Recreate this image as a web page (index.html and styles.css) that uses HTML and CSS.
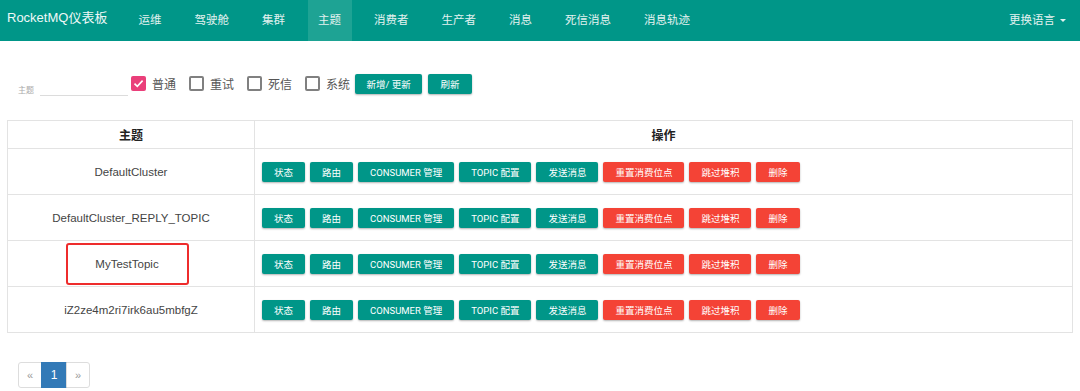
FILE: index.html
```html
<!DOCTYPE html>
<html lang="zh">
<head>
<meta charset="utf-8">
<title>RocketMQ仪表板</title>
<link rel="stylesheet" href="styles.css">
</head>
<body>
<nav class="navbar">
  <div class="brand">RocketMQ仪表板</div>
  <ul class="nav">
    <li>运维</li>
    <li>驾驶舱</li>
    <li>集群</li>
    <li class="active">主题</li>
    <li>消费者</li>
    <li>生产者</li>
    <li>消息</li>
    <li>死信消息</li>
    <li>消息轨迹</li>
  </ul>
  <div class="lang">更换语言 <span class="caret"></span></div>
</nav>

<main class="content">
  <div class="filter">
    <div class="field">
      <label class="field-label">主题</label>
      <input class="field-input" type="text">
    </div>
    <div class="checks">
      <span class="cb checked"><svg viewBox="0 0 15 15" width="15" height="15"><path d="M3.5 7.6 L6.3 10.3 L11.6 4.6" fill="none" stroke="#fff" stroke-width="1.6"/></svg></span>
      <span class="cb-label">普通</span>
      <span class="cb"></span>
      <span class="cb-label">重试</span>
      <span class="cb"></span>
      <span class="cb-label">死信</span>
      <span class="cb"></span>
      <span class="cb-label last">系统</span>
      <button class="btn teal wide">新增/ 更新</button>
      <button class="btn teal refresh">刷新</button>
    </div>
  </div>

  <table class="grid">
    <thead>
      <tr><th class="col-name">主题</th><th>操作</th></tr>
    </thead>
    <tbody>
      <tr>
        <td class="col-name">DefaultCluster</td>
        <td class="ops">
          <button class="btn teal">状态</button><button class="btn teal">路由</button><button class="btn teal">CONSUMER 管理</button><button class="btn teal">TOPIC 配置</button><button class="btn teal">发送消息</button><button class="btn red">重置消费位点</button><button class="btn red">跳过堆积</button><button class="btn red">删除</button>
        </td>
      </tr>
      <tr>
        <td class="col-name">DefaultCluster_REPLY_TOPIC</td>
        <td class="ops">
          <button class="btn teal">状态</button><button class="btn teal">路由</button><button class="btn teal">CONSUMER 管理</button><button class="btn teal">TOPIC 配置</button><button class="btn teal">发送消息</button><button class="btn red">重置消费位点</button><button class="btn red">跳过堆积</button><button class="btn red">删除</button>
        </td>
      </tr>
      <tr>
        <td class="col-name"><span class="highlight">MyTestTopic</span></td>
        <td class="ops">
          <button class="btn teal">状态</button><button class="btn teal">路由</button><button class="btn teal">CONSUMER 管理</button><button class="btn teal">TOPIC 配置</button><button class="btn teal">发送消息</button><button class="btn red">重置消费位点</button><button class="btn red">跳过堆积</button><button class="btn red">删除</button>
        </td>
      </tr>
      <tr>
        <td class="col-name">iZ2ze4m2ri7irk6au5mbfgZ</td>
        <td class="ops">
          <button class="btn teal">状态</button><button class="btn teal">路由</button><button class="btn teal">CONSUMER 管理</button><button class="btn teal">TOPIC 配置</button><button class="btn teal">发送消息</button><button class="btn red">重置消费位点</button><button class="btn red">跳过堆积</button><button class="btn red">删除</button>
        </td>
      </tr>
    </tbody>
  </table>

  <ul class="pagination">
    <li class="page">«</li>
    <li class="page current">1</li>
    <li class="page">»</li>
  </ul>
</main>
</body>
</html>
```

FILE: styles.css
```css
* { box-sizing: border-box; }

html, body {
  margin: 0;
  padding: 0;
  background: #fff;
  font-family: "Liberation Sans", "Noto Sans CJK SC", sans-serif;
  color: #333;
}

.navbar {
  height: 41px;
  background: #009688;
  display: flex;
  align-items: stretch;
  color: #e6f4f2;
}

.brand {
  padding-left: 7px;
  width: 128px;
  font-size: 13px;
  line-height: 36px;
  color: #eef8f7;
  white-space: nowrap;
}

.nav {
  list-style: none;
  margin: 0;
  padding: 0;
  display: flex;
  gap: 12px;
  flex: 1;
}

.nav li {
  padding: 0 10.5px;
  font-size: 11.5px;
  line-height: 41px;
  color: #e3f2f0;
}

.nav li.active {
  background: #1ea394;
}

.lang {
  font-size: 11.5px;
  line-height: 41px;
  padding-right: 14px;
  color: #e3f2f0;
  display: flex;
  align-items: center;
  gap: 3px;
}

.caret {
  display: inline-block;
  width: 0;
  height: 0;
  border-left: 3px solid transparent;
  border-right: 3px solid transparent;
  border-top: 3px solid #e3f2f0;
  margin-left: 2px;
}

.content {
  padding: 33px 7px 0 7px;
}

.filter {
  display: flex;
  align-items: flex-start;
  height: 22px;
  padding-left: 11px;
  margin-bottom: 24px;
}

.field {
  display: flex;
  align-items: flex-end;
  margin-top: 7px;
  height: 15px;
}

.field-label {
  font-size: 8px;
  color: #aaa;
  width: 22px;
  line-height: 10px;
  margin-bottom: 0;
}

.field-input {
  width: 88px;
  height: 15px;
  border: none;
  border-bottom: 1px solid #dcdcdc;
  outline: none;
  padding: 0;
  background: transparent;
}

.checks {
  display: flex;
  align-items: center;
  height: 19px;
  margin-left: 3px;
}

.cb {
  width: 15px;
  height: 15px;
  border: 2px solid #808080;
  border-radius: 2px;
  display: inline-flex;
  flex: none;
}

.cb.checked {
  background: #ea3f7a;
  border: none;
}

.cb-label {
  font-size: 12px;
  color: #555;
  margin-left: 6px;
  margin-right: 13px;
}

.cb-label.last {
  margin-right: 5px;
}

.btn {
  border: none;
  border-radius: 2px;
  height: 20px;
  padding: 0 12px;
  font-family: Roboto, "Noto Sans CJK SC", sans-serif;
  font-size: 9.5px;
  color: #fff;
  cursor: pointer;
  box-shadow: 0 1px 2px rgba(0, 0, 0, 0.3);
  margin-right: 5px;
  white-space: nowrap;
}

.btn.teal { background: #009688; }
.btn.red { background: #f44336; }

.btn.wide {
  width: 67px;
  padding: 0;
  margin-right: 6px;
}

.btn.refresh {
  width: 44px;
  padding: 0;
}

.grid {
  width: 1066px;
  border-collapse: collapse;
  border: 1px solid #e3e3e3;
}

.grid th,
.grid td {
  border: 1px solid #e3e3e3;
  font-size: 11.5px;
  color: #444;
}

.grid th {
  height: 28px;
  font-size: 12px;
  font-weight: bold;
  color: #222;
  text-align: center;
}

.grid td {
  height: 46px;
  text-align: center;
}

.grid .col-name {
  width: 247px;
}

.grid td.ops {
  text-align: left;
  padding: 0 0 0 7px;
  font-size: 0;
}

.highlight {
  display: inline-block;
  width: 123px;
  height: 42px;
  line-height: 38px;
  border: 2px solid #ee2c2c;
  border-radius: 3px;
  margin-left: -8px;
  vertical-align: middle;
}

.pagination {
  list-style: none;
  display: flex;
  margin: 29px 0 0 11px;
  padding: 0;
}

.page {
  height: 26px;
  width: 24px;
  border: 1px solid #ddd;
  font-size: 11px;
  color: #999;
  display: flex;
  align-items: center;
  justify-content: center;
  margin-left: -1px;
}

.page:first-child {
  border-radius: 3px 0 0 3px;
  margin-left: 0;
}

.page:last-child {
  border-radius: 0 3px 3px 0;
}

.page.current {
  background: #337ab7;
  border-color: #337ab7;
  color: #fff;
  width: 26px;
  font-size: 12px;
}
```
